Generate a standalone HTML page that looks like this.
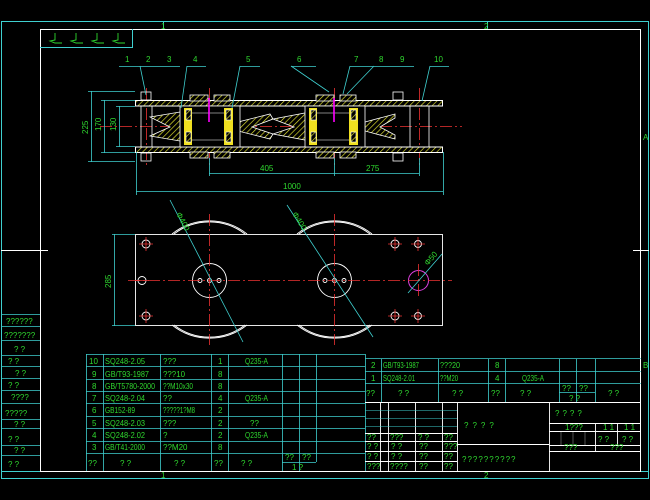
<!DOCTYPE html>
<html><head><meta charset="utf-8"><style>
html,body{margin:0;padding:0;background:#000;}
svg{display:block}
text{font-family:"Liberation Sans",sans-serif;fill:#2fd82f;font-size:8px}
</style></head><body>
<svg width="650" height="500" viewBox="0 0 650 500" xmlns="http://www.w3.org/2000/svg">
<defs>
<pattern id="h" width="4" height="4" patternUnits="userSpaceOnUse" patternTransform="rotate(45)">
<rect width="4" height="4" fill="#000"/><line x1="0" y1="0" x2="0" y2="4" stroke="#e8e830" stroke-width="1.3"/></pattern>
</defs>
<rect width="650" height="500" fill="#000"/>
<g stroke="#3fd0d0" fill="none" stroke-width="1">
<rect x="1.5" y="21.5" width="647" height="457"/>
<line x1="163.5" y1="21" x2="163.5" y2="29"/><line x1="487.5" y1="21" x2="487.5" y2="29"/>
<line x1="1" y1="471.5" x2="649" y2="471.5"/>
</g>
<text x="161" y="29">1</text><text x="484" y="29">2</text>
<text x="643" y="140">A</text><text x="643" y="368">B</text>
<text x="161" y="478">1</text><text x="484" y="478">2</text>
<g stroke="#fff" fill="none" stroke-width="1">
<rect x="40.5" y="29.5" width="600" height="442"/>
<line x1="1" y1="250.5" x2="48" y2="250.5"/><line x1="633" y1="250.5" x2="649" y2="250.5"/>
</g>
<path d="M40 47.5H132.5V29" stroke="#3fd0d0" fill="none"/>
<g stroke="#2fd82f" fill="none" stroke-width="0.9">
<path d="M55 33V40L50 41L55 43H62M76 33V40L71 41L76 43H83M97 33V40L92 41L97 43H104M118 33V40L113 41L118 43H125"/>
</g>

<!-- TOP VIEW -->
<g stroke="#e33" stroke-width="0.8" stroke-dasharray="12 3 2 3" fill="none">
<line x1="100" y1="126.5" x2="462" y2="126.5"/>
<line x1="146.5" y1="88" x2="146.5" y2="165"/>
<line x1="209.5" y1="88" x2="209.5" y2="165"/>
<line x1="334.5" y1="88" x2="334.5" y2="165"/>
<line x1="419.5" y1="88" x2="419.5" y2="165"/>
</g>
<rect x="135.5" y="100.5" width="307" height="5.5" fill="url(#h)" stroke="#fff"/>
<rect x="135.5" y="147" width="307" height="5.5" fill="url(#h)" stroke="#fff"/>
<g stroke="#fff" fill="none" stroke-width="0.8">
<line x1="141" y1="106" x2="141" y2="147"/><line x1="152" y1="106" x2="152" y2="147"/>
<line x1="410" y1="106" x2="410" y2="147"/><line x1="429" y1="106" x2="429" y2="147"/>
<rect x="141" y="92" width="10" height="8"/><rect x="141" y="153" width="10" height="8"/>
<rect x="393" y="92" width="10" height="8"/><rect x="393" y="153" width="10" height="8"/>
</g>
<g fill="url(#h)" stroke="#fff" stroke-width="0.8">
<path d="M150 117L180 112L200 122L200 131L180 141L150 136L170 127Z"/>
<path d="M238 122L270 114L273 119L252 127L273 134L270 139L238 131Z"/>
<path d="M273 119L305 113L307 122V131L305 140L273 134L294 127Z"/>
<path d="M365 122L395 114L395 118L380 127L395 135L395 139L365 131Z"/>
</g>
<g stroke="#fff" stroke-width="0.8">
<rect x="180" y="106" width="60" height="41" fill="#000"/>
<rect x="305" y="106" width="60" height="41" fill="#000"/>
<rect x="190" y="95" width="18" height="6" fill="url(#h)"/><rect x="214" y="95" width="16" height="6" fill="url(#h)"/>
<rect x="190" y="152" width="18" height="6" fill="url(#h)"/><rect x="214" y="152" width="16" height="6" fill="url(#h)"/>
<rect x="316" y="95" width="18" height="6" fill="url(#h)"/><rect x="340" y="95" width="16" height="6" fill="url(#h)"/>
<rect x="316" y="152" width="18" height="6" fill="url(#h)"/><rect x="340" y="152" width="16" height="6" fill="url(#h)"/>
</g>
<g fill="#f0e020">
<rect x="184" y="108" width="8" height="37"/><rect x="224" y="108" width="9" height="37"/>
<rect x="309" y="108" width="8" height="37"/><rect x="349" y="108" width="9" height="37"/>
</g>
<g fill="url(#h)" stroke="#fff" stroke-width="0.6">
<rect x="186" y="110" width="5" height="10"/><rect x="186" y="132" width="5" height="10"/>
<rect x="226" y="110" width="5" height="10"/><rect x="226" y="132" width="5" height="10"/>
<rect x="311" y="110" width="5" height="10"/><rect x="311" y="132" width="5" height="10"/>
<rect x="351" y="110" width="5" height="10"/><rect x="351" y="132" width="5" height="10"/>
</g>
<g stroke="#fff" stroke-width="0.6"><line x1="192" y1="113" x2="224" y2="113"/><line x1="192" y1="140" x2="224" y2="140"/><line x1="317" y1="113" x2="349" y2="113"/><line x1="317" y1="140" x2="349" y2="140"/></g>
<g stroke="#f0f" stroke-width="1.6"><line x1="209" y1="98" x2="209" y2="122"/><line x1="334" y1="98" x2="334" y2="122"/></g>
<g stroke="#3fd0d0" fill="none" stroke-width="0.8">
<path d="M119 66.5H180M140 66L146 95"/>
<path d="M187 66.5H206M187 66L181 108"/>
<path d="M240 66.5H260M240 66L232 108"/>
<path d="M291 66.5H316M291 66L329 92"/>
<path d="M350 66.5H414M350 66L343 94M374 66L347 94"/>
<path d="M430 66.5H449M430 66L422 101"/>
<path d="M88 91.5H135M88 161.5H135M91.5 91V162"/>
<path d="M101 100.5H135M101 152.5H135M104.5 100V153"/>
<path d="M116 106.5H135M116 146.5H135M119.5 106V147"/>
<path d="M136.5 152V195M443.5 152V195M136 191.5H443"/>
<path d="M209.5 158V176M334.5 158V176M419.5 158V176M209 173.5H419"/>
</g>
<text x="88" y="134" transform="rotate(-90 88 134)" font-size="7">225</text>
<text x="101" y="131" transform="rotate(-90 101 131)" font-size="7">170</text>
<text x="116" y="131" transform="rotate(-90 116 131)" font-size="7">130</text>
<text x="260" y="171" font-size="7">405</text><text x="366" y="171" font-size="7">275</text>
<text x="283" y="189" font-size="7">1000</text>
<text x="125" y="62" font-size="9">1</text><text x="146" y="62" font-size="9">2</text><text x="167" y="62" font-size="9">3</text>
<text x="193" y="62" font-size="9">4</text><text x="246" y="62" font-size="9">5</text><text x="297" y="62" font-size="9">6</text>
<text x="354" y="62" font-size="9">7</text><text x="379" y="62" font-size="9">8</text><text x="400" y="62" font-size="9">9</text>
<text x="434" y="62" font-size="9">10</text>

<!-- BOTTOM VIEW -->
<g stroke="#fff" fill="none" stroke-width="0.9">
<path d="M174 234A58 58 0 0 1 245 234M172 234A60 60 0 0 1 247 234"/>
<path d="M174 325A58 58 0 0 0 245 325M172 325A60 60 0 0 0 247 325"/>
<path d="M299 234A58 58 0 0 1 370 234M297 234A60 60 0 0 1 372 234"/>
<path d="M299 325A58 58 0 0 0 370 325M297 325A60 60 0 0 0 372 325"/>
<rect x="135.5" y="234.5" width="307" height="91"/>
<circle cx="209.5" cy="280.5" r="17"/><circle cx="334.5" cy="280.5" r="17"/>
<circle cx="200" cy="280.5" r="2"/><circle cx="209.5" cy="280.5" r="2"/><circle cx="219" cy="280.5" r="2"/>
<circle cx="325" cy="280.5" r="2"/><circle cx="334.5" cy="280.5" r="2"/><circle cx="344" cy="280.5" r="2"/>
<circle cx="146" cy="244" r="4"/><circle cx="146" cy="316" r="4"/><circle cx="142" cy="280.5" r="4"/>
<circle cx="395" cy="244" r="4"/><circle cx="418" cy="244" r="3.5"/><circle cx="395" cy="316" r="4"/><circle cx="418" cy="316" r="3.5"/>
</g>
<circle cx="418.5" cy="280.5" r="10" stroke="#e040e0" fill="none"/>
<g stroke="#e33" stroke-width="0.8" stroke-dasharray="12 3 2 3" fill="none">
<line x1="128" y1="280.5" x2="452" y2="280.5"/>
<line x1="209.5" y1="214" x2="209.5" y2="345"/><line x1="334.5" y1="214" x2="334.5" y2="345"/>
<line x1="418.5" y1="264" x2="418.5" y2="297"/>
</g>
<g stroke="#e33" stroke-width="0.8">
<path d="M139 244H153M146 237V251M139 316H153M146 309V323M135 280.5H149M388 244H402M395 237V251M411 244H425M418 237V251M388 316H402M395 309V323M411 316H425M418 309V323"/>
</g>
<g stroke="#3fd0d0" stroke-width="0.8" fill="none">
<line x1="170" y1="200" x2="243" y2="342"/><line x1="287" y1="205" x2="373" y2="337"/>
<line x1="408" y1="293" x2="442" y2="254"/>
<path d="M112 234.5H135M112 325.5H135M114.5 234V326"/>
</g>
<text x="176" y="214" transform="rotate(62 176 214)" font-size="7">Φ400</text>
<text x="292" y="214" transform="rotate(58 292 214)" font-size="7">Φ400</text>
<text x="428" y="266" transform="rotate(-50 428 266)" font-size="7">Φ50</text>
<text x="111" y="288" transform="rotate(-90 111 288)" font-size="7">285</text>

<!-- LEFT STRIP -->
<g stroke="#3fd0d0" fill="none" stroke-width="0.8">
<path d="M1 314.5H40M1 326.5H40M1 340.5H40M1 355.5H40M1 366.5H40M1 378.5H40M1 390.5H40M1 403.5H40M1 419.5H40M1 428.5H40M1 445.5H40M1 455.5H40"/>
</g>
<line x1="40.5" y1="250" x2="40.5" y2="471" stroke="#fff"/>
<g font-size="7">
<text x="6" y="324">??????</text><text x="4" y="338">???????</text><text x="14" y="352">? ?</text>
<text x="8" y="364">? ?</text><text x="15" y="376">? ?</text><text x="8" y="388">? ?</text><text x="11" y="400">????</text>
<text x="5" y="416">?????</text><text x="14" y="427">? ?</text><text x="8" y="442">? ?</text><text x="14" y="453">? ?</text><text x="8" y="467">? ?</text>
</g>

<!-- PARTS TABLE -->
<g stroke="#3fd0d0" fill="none" stroke-width="0.8">
<path d="M86.5 354V471M103.5 354V471M160.5 354V471M211.5 354V471M228.5 354V471M282.5 354V471M299.5 354V471M316.5 354V462"/>
<path d="M86 354.5H365M86 366.5H365M86 379.5H365M86 391.5H365M86 403.5H365M86 416.5H365M86 428.5H365M86 441.5H365M86 453.5H365M282 462.5H316"/>
<path d="M365.5 354V471M365 358.5H641M365 371.5H641M365 383.5H641M381.5 359V403M438.5 359V403M488.5 359V403M505.5 359V403M559.5 359V403M576.5 359V403M595.5 359V403M559 392.5H595"/>
</g>
<g font-size="6.5">
<text x="89" y="364">10</text><text x="105" y="364" textLength="40" lengthAdjust="spacingAndGlyphs">SQ248-2.05</text><text x="163" y="364">???</text><text x="218" y="364">1</text><text x="245" y="364" textLength="23" lengthAdjust="spacingAndGlyphs">Q235-A</text>
<text x="92" y="377">9</text><text x="105" y="377" textLength="44" lengthAdjust="spacingAndGlyphs">GB/T93-1987</text><text x="163" y="377" textLength="22" lengthAdjust="spacingAndGlyphs">???10</text><text x="218" y="377">8</text>
<text x="92" y="389">8</text><text x="105" y="389" textLength="50" lengthAdjust="spacingAndGlyphs">GB/T5780-2000</text><text x="163" y="389" textLength="30" lengthAdjust="spacingAndGlyphs">??M10x30</text><text x="218" y="389">8</text>
<text x="92" y="401">7</text><text x="105" y="401" textLength="40" lengthAdjust="spacingAndGlyphs">SQ248-2.04</text><text x="163" y="401">??</text><text x="218" y="401">4</text><text x="245" y="401" textLength="23" lengthAdjust="spacingAndGlyphs">Q235-A</text>
<text x="92" y="413">6</text><text x="105" y="413" textLength="30" lengthAdjust="spacingAndGlyphs">GB152-89</text><text x="163" y="413" textLength="32" lengthAdjust="spacingAndGlyphs">?????1?M8</text><text x="218" y="413">2</text>
<text x="92" y="426">5</text><text x="105" y="426" textLength="40" lengthAdjust="spacingAndGlyphs">SQ248-2.03</text><text x="163" y="426">???</text><text x="218" y="426">2</text><text x="250" y="426">??</text>
<text x="92" y="438">4</text><text x="105" y="438" textLength="40" lengthAdjust="spacingAndGlyphs">SQ248-2.02</text><text x="163" y="438">?</text><text x="218" y="438">2</text><text x="245" y="438" textLength="23" lengthAdjust="spacingAndGlyphs">Q235-A</text>
<text x="92" y="450">3</text><text x="105" y="450" textLength="40" lengthAdjust="spacingAndGlyphs">GB/T41-2000</text><text x="163" y="450">??M20</text><text x="218" y="450">8</text>
<text x="88" y="466">??</text><text x="120" y="466">?  ?</text><text x="174" y="466">?  ?</text><text x="214" y="466">??</text><text x="241" y="466">?  ?</text>
<text x="285" y="460">??</text><text x="302" y="460">??</text><text x="292" y="470">1 ?</text>
<text x="371" y="368">2</text><text x="383" y="368" textLength="36" lengthAdjust="spacingAndGlyphs">GB/T93-1987</text><text x="440" y="368" textLength="20" lengthAdjust="spacingAndGlyphs">???20</text><text x="495" y="368">8</text>
<text x="371" y="381">1</text><text x="383" y="381" textLength="32" lengthAdjust="spacingAndGlyphs">SQ248-2.01</text><text x="440" y="381" textLength="18" lengthAdjust="spacingAndGlyphs">??M20</text><text x="495" y="381">4</text><text x="522" y="381" textLength="22" lengthAdjust="spacingAndGlyphs">Q235-A</text>
<text x="366" y="396">??</text><text x="398" y="396">?  ?</text><text x="452" y="396">?  ?</text><text x="491" y="396">??</text><text x="520" y="396">?  ?</text>
<text x="562" y="391">??</text><text x="579" y="391">??</text><text x="569" y="401">?  ?</text><text x="608" y="396">?  ?</text>
</g>

<!-- TITLE BLOCK -->
<g stroke="#fff" fill="none" stroke-width="0.9">
<path d="M365 402.5H641M457.5 402V471M549.5 402V471M457 444.5H549M549 423.5H641M549 431.5H641M549 445.5H641M549 451.5H641M595.5 423V451M617.5 423V445"/>
<path d="M365 433.5H457M380.5 402V471M388.5 402V471M415.5 402V471M442.5 402V471M365 441.5H457M365 451.5H457M365 461.5H457"/>
</g>
<g stroke="#3fd0d0" fill="none" stroke-width="0.6"><path d="M365 410.5H457M365 418.5H457M365 426.5H457"/></g>
<g stroke="#888" stroke-width="0.6"><path d="M561 432V445M573 432V445M585 432V445"/></g>
<g font-size="6">
<text x="367" y="440">??</text><text x="390" y="440">???</text><text x="418" y="440">? ?</text><text x="444" y="440">??</text>
<text x="367" y="449">? ?</text><text x="391" y="449">? ?</text><text x="419" y="449">??</text><text x="444" y="449">???</text>
<text x="367" y="459">? ?</text><text x="391" y="459">? ?</text><text x="419" y="459">??</text><text x="444" y="459">??</text>
<text x="367" y="469">???</text><text x="390" y="469">????</text><text x="419" y="469">??</text><text x="444" y="469">??</text>
<text x="565" y="430">1???</text><text x="603" y="430">1 1</text><text x="624" y="430">1 1</text>
<text x="598" y="442">? ?</text><text x="622" y="442">? ?</text>
<text x="564" y="450">???</text><text x="610" y="450">???</text>
</g>
<text x="464" y="428" font-size="11" letter-spacing="4">????</text>
<text x="462" y="462" font-size="9" letter-spacing="1">??????????</text>
<text x="555" y="416" font-size="10" letter-spacing="3">????</text>
</svg>
</body></html>
